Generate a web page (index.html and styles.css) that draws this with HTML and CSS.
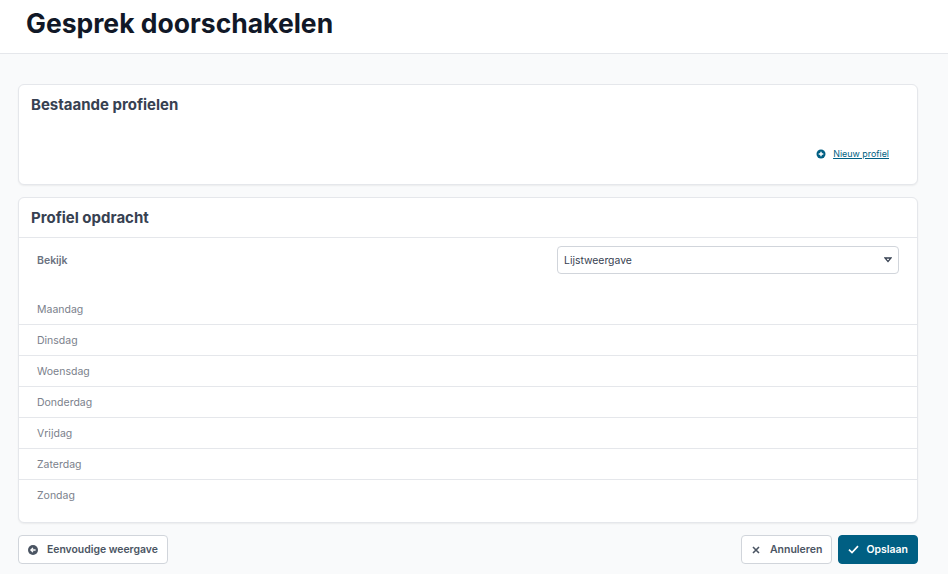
FILE: index.html
```html
<!DOCTYPE html>
<html lang="nl">
<head>
<meta charset="utf-8">
<title>Gesprek doorschakelen</title>
<link rel="stylesheet" href="styles.css">
</head>
<body>
<header class="page-header"><h1>Gesprek doorschakelen</h1></header>
<main class="content">
  <section class="card card-existing">
    <h2>Bestaande profielen</h2>
    <div class="new-row">
      <a class="new-link" href="#">
        <svg class="ico" width="10" height="10" viewBox="0 0 10 10"><circle cx="5" cy="5" r="4.5" fill="#005f83"/><path d="M5 2.7v4.6M2.7 5h4.6" stroke="#fff" stroke-width="1.4"/></svg>
        <span>Nieuw profiel</span>
      </a>
    </div>
  </section>
  <section class="card card-assign">
    <h2 class="bordered">Profiel opdracht</h2>
    <div class="view-row">
      <label class="view-label">Bekijk</label>
      <div class="select"><span>Lijstweergave</span>
        <svg width="8" height="6" viewBox="0 0 8 6"><path d="M1 1h6L4 4.6z" fill="none" stroke="#374151" stroke-width="1.3"/></svg>
      </div>
    </div>
    <ul class="days">
      <li>Maandag</li><li>Dinsdag</li><li>Woensdag</li><li>Donderdag</li><li>Vrijdag</li><li>Zaterdag</li><li>Zondag</li>
    </ul>
  </section>
  <footer class="actions">
    <button class="btn btn-back"><svg width="10" height="10" viewBox="0 0 10 10"><circle cx="5" cy="5" r="5" fill="#4b5563"/><path d="M7.6 5H3M5 2.9 2.9 5 5 7.1" fill="none" stroke="#fff" stroke-width="1.3"/></svg>Eenvoudige weergave</button>
    <div class="actions-right">
      <button class="btn btn-cancel"><svg width="8" height="8" viewBox="0 0 8 8"><path d="M1 1l6 6M7 1 1 7" stroke="#4b5563" stroke-width="1.6"/></svg>Annuleren</button>
      <button class="btn btn-primary"><svg width="11" height="9" viewBox="0 0 11 9"><path d="M1 4.6 4 7.5 10 1.2" fill="none" stroke="#fff" stroke-width="1.7"/></svg>Opslaan</button>
    </div>
  </footer>
</main>
</body>
</html>
```
FILE: styles.css
```css
* { box-sizing: border-box; }
html, body { margin: 0; height: 100%; }
body { background: #f9fafb; font-family: Inter, "Liberation Sans", sans-serif; color: #374151; overflow: hidden; }
.page-header { height: 54px; background: #fff; border-bottom: 1px solid #e5e7eb; padding: 6px 26px 0; }
h1 { margin: 0; font-size: 26.5px; line-height: 34px; font-weight: 700; color: #111827; }
.content { padding: 30px 30px 0 18px; }
.card { background: #fff; border: 1px solid #e5e7eb; border-radius: 6px; box-shadow: 0 1px 2px rgba(0,0,0,.06); }
.card-existing { height: 101px; padding: 0 12px; margin-bottom: 12px; }
h2 { margin: 0; font-size: 15px; line-height: 20px; font-weight: 700; color: #374151; padding-top: 10px; }
.new-row { display: flex; justify-content: flex-end; padding: 32px 16px 0 0; }
.new-link { display: flex; align-items: center; gap: 7px; font-size: 8.9px; line-height: 14px; color: #005f83; }
.new-link span { text-decoration: underline; }
.card-assign { height: 326px; }
.bordered { height: 40px; padding: 10px 12px 0; border-bottom: 1px solid #e5e7eb; }
.view-row { display: flex; justify-content: space-between; align-items: center; padding: 8px 18px 0; }
.view-label { font-size: 10.5px; font-weight: 600; color: #6b7280; }
.select { width: 342px; height: 28px; border: 1px solid #d1d5db; border-radius: 4px; display: flex; align-items: center; justify-content: space-between; padding: 0 6px; font-size: 10.4px; color: #374151; }
.days { list-style: none; margin: 20px 0 0; padding: 0; }
.days li { height: 31px; padding: 0 18px; display: flex; align-items: center; font-size: 10.5px; color: #7b818c; border-bottom: 1px solid #e5e7eb; }
.days li:last-child { border-bottom: 0; height: 30px; }
.actions { display: flex; justify-content: space-between; margin-top: 12px; }
.actions-right { display: flex; gap: 6px; }
.btn { height: 29px; display: flex; align-items: center; gap: 8px; padding: 0 9px; background: #fff; border: 1px solid #d1d5db; border-radius: 4px; font-family: inherit; font-size: 10.5px; font-weight: 600; color: #4b5563; }
.btn-back { gap: 9px; font-size: 10.4px; }
.btn-cancel { gap: 10px; padding-left: 10px; }
.btn-primary { background: #005f83; border-color: #005f83; color: #fff; gap: 7px; }
```
